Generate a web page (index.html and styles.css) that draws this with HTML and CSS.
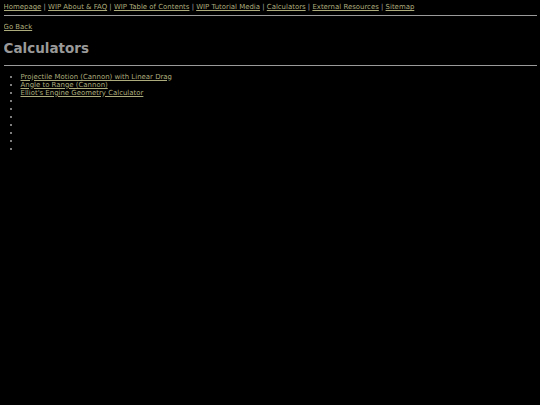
FILE: index.html
```html
<!DOCTYPE html>
<html>
<head>
<meta charset="utf-8">
<link rel="stylesheet" href="styles.css">
</head>
<body>
<nav class="nav">
<a href="#">Homepage</a> | <a href="#">WIP About &amp; FAQ</a> | <a href="#">WIP Table of Contents</a> | <a href="#">WIP Tutorial Media</a> | <a href="#">Calculators</a> | <a href="#">External Resources</a> | <a href="#">Sitemap</a>
</nav>
<hr class="rule">
<p class="back"><a href="#">Go Back</a></p>
<h1 class="title">Calculators</h1>
<hr class="rule">
<ul class="list">
<li><a href="#">Projectile Motion (Cannon) with Linear Drag</a></li>
<li><a href="#">Angle to Range (Cannon)</a></li>
<li><a href="#">Elliot's Engine Geometry Calculator</a></li>
<li></li>
<li></li>
<li></li>
<li></li>
<li></li>
<li></li>
<li></li>
</ul>
</body>
</html>
```
FILE: styles.css
```css
html { background: #000; }
body {
  margin: 3px 3.5px;
  font-family: "DejaVu Sans", sans-serif;
  font-size: 6.95px;
  color: #a8a8a8;
  background: #000;
}
a { color: #acac7c; }
.nav { margin: 0; }
.rule {
  border: none;
  border-top: 1px solid #9a9a9a;
  height: 0;
  margin: 3.5px 0;
}
.back { margin: 7px 0; }
.title {
  font-size: 13.5px;
  color: #999;
  margin: 9px 0;
}
.list {
  margin: 7px 0;
  padding-left: 17px;
}
.list li { min-height: 8px; }
```
